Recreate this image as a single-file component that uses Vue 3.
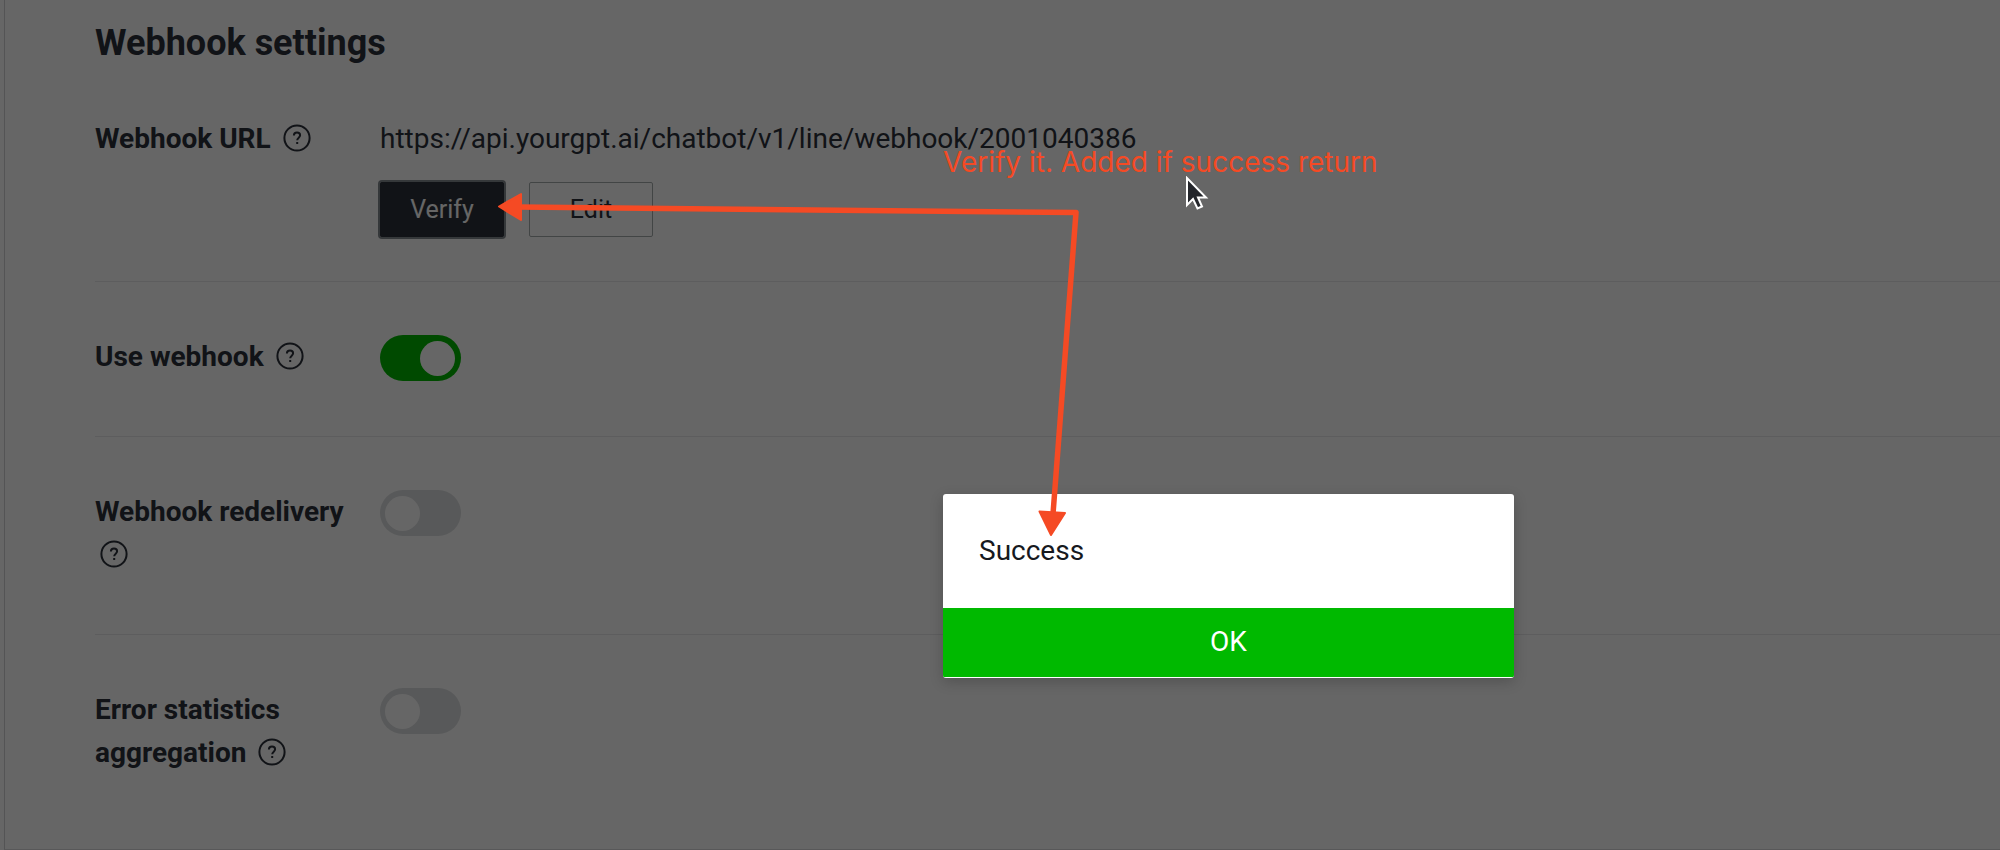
<script setup>
import { ref } from 'vue'

const settings = ref([
  { id: 'use', label: 'Use webhook', on: true },
  { id: 'redelivery', label: 'Webhook redelivery', on: false },
  { id: 'errors', label: 'Error statistics aggregation', on: false },
])
</script>

<template>
  <div class="page">
    <main class="panel">
      <h2 class="title">Webhook settings</h2>

      <section class="row url-row">
        <div class="label">
          Webhook URL
          <svg class="help" viewBox="0 0 28 28" aria-hidden="true">
            <circle cx="14" cy="14" r="12.6" />
            <path d="M10.9 11.6c0-1.9 1.3-3 3.1-3s3.1 1.1 3.1 2.7c0 2.3-2.9 2.4-2.9 5" />
            <path d="M14.2 18v2" />
          </svg>
        </div>
        <div class="value">
          <div class="url">https://api.yourgpt.ai/chatbot/v1/line/webhook/2001040386</div>
          <div class="buttons">
            <button class="btn primary" type="button">Verify</button>
            <button class="btn" type="button">Edit</button>
          </div>
        </div>
      </section>

      <section v-for="s in settings" :key="s.id" class="row">
        <label class="label" :for="s.id">
          {{ s.label }}
          <svg class="help" viewBox="0 0 28 28" aria-hidden="true">
            <circle cx="14" cy="14" r="12.6" />
            <path d="M10.9 11.6c0-1.9 1.3-3 3.1-3s3.1 1.1 3.1 2.7c0 2.3-2.9 2.4-2.9 5" />
            <path d="M14.2 18v2" />
          </svg>
        </label>
        <input :id="s.id" v-model="s.on" class="switch" type="checkbox" />
      </section>
    </main>

    <div class="backdrop"></div>

    <div class="dialog" role="alertdialog" aria-labelledby="dialog-message">
      <p id="dialog-message" class="message">Success</p>
      <button class="ok" type="button">OK</button>
    </div>

    <svg class="arrows" width="1200" height="560" viewBox="0 0 1200 560" aria-hidden="true">
      <path class="line" d="M518 207L1076 212.5L1053 514" />
      <path class="head" d="M499 206.500L521 194V220Z" />
      <path class="head" d="M1051 535L1039.500 511.500L1065 513Z" />
    </svg>
    <p class="note">Verify it. Added if success return</p>
    <svg class="cursor" width="24" height="36" viewBox="0 0 24 36" aria-hidden="true">
      <path d="M2 2V29L8 23L12.500 32.500L17 30.500L13 21.500H21Z" />
    </svg>
  </div>
</template>

<style>
body {
  margin: 0;
  background: #666;
}
</style>

<style scoped>
.page {
  position: relative;
  display: flex;
  min-height: 100vh;
  padding-left: 4px;
  box-sizing: border-box;
  overflow: hidden;
  background: #fff;
  color: #2b303a;
  font-family: Roboto, "Liberation Sans", sans-serif;
  font-size: 28px;
  line-height: 43px;
}
.panel {
  flex: 1;
  box-sizing: border-box;
  padding: 16px 0 0 90px;
  border-left: 1px solid #d2d2d4;
  border-bottom: 1px solid #dcdcde;
}
.title {
  margin: 0;
  font-size: 36px;
  line-height: 54px;
  font-weight: 700;
}
.row {
  display: flex;
  align-items: flex-start;
  gap: 16px;
  padding: 53px 0 58px;
  border-bottom: 1px solid #e8e8ea;
}
.row:last-child {
  border-bottom: 0;
}
.url-row {
  padding: 47px 0 44px;
}
.label {
  flex: 0 0 269px;
  font-weight: 700;
}
.help {
  width: 28px;
  height: 28px;
  margin-left: 5px;
  vertical-align: -4px;
  fill: none;
  stroke: currentColor;
  stroke-width: 2;
}
.buttons {
  display: flex;
  gap: 25px;
  margin-top: 22px;
}
.btn {
  width: 124px;
  height: 55px;
  padding: 0;
  border: 1px solid #a6acac;
  border-radius: 2px;
  background: #fff;
  color: inherit;
  font: inherit;
  font-size: 25px;
}
.primary {
  border-color: #2b303a;
  background: #2b303a;
  color: #fff;
  box-shadow: 0 0 0 2px #868c92;
}
.switch {
  position: relative;
  width: 81px;
  height: 46px;
  margin: 0 0 -3px;
  appearance: none;
  border-radius: 23px;
  background: #dcdee0;
}
.switch::before {
  content: "";
  position: absolute;
  top: 6px;
  left: 5px;
  width: 35px;
  height: 35px;
  border-radius: 50%;
  background: #fff;
}
.switch:checked {
  background: #00b900;
}
.switch:checked::before {
  left: 40px;
}
.backdrop {
  position: absolute;
  inset: 0;
  background: rgba(0, 0, 0, 0.6);
}
.dialog {
  position: absolute;
  top: 494px;
  left: 943px;
  width: 571px;
  overflow: hidden;
  border-radius: 3px;
  background: #fff;
  box-shadow: 0 4px 14px rgba(0, 0, 0, 0.2);
  color: #16191e;
}
.message {
  margin: 0;
  padding: 35px 36px 36px;
}
.ok {
  display: block;
  width: 100%;
  height: 69px;
  margin-bottom: 1px;
  padding: 0 0 2px;
  border: 0;
  background: #00b900;
  color: #fff;
  font: inherit;
}
.arrows {
  position: absolute;
  top: 0;
  left: 0;
}
.line {
  fill: none;
  stroke: #f54a24;
  stroke-width: 5.5;
  stroke-linejoin: round;
}
.head {
  fill: #f54a24;
  stroke: #f54a24;
  stroke-width: 2;
  stroke-linejoin: round;
}
.note {
  position: absolute;
  top: 141px;
  left: 943px;
  margin: 0;
  color: #f54a24;
  font-family: Inter, Roboto, sans-serif;
  white-space: nowrap;
}
.cursor {
  position: absolute;
  top: 176px;
  left: 1185px;
}
.cursor path {
  fill: #24262b;
  stroke: #fff;
  stroke-width: 2;
}
</style>
